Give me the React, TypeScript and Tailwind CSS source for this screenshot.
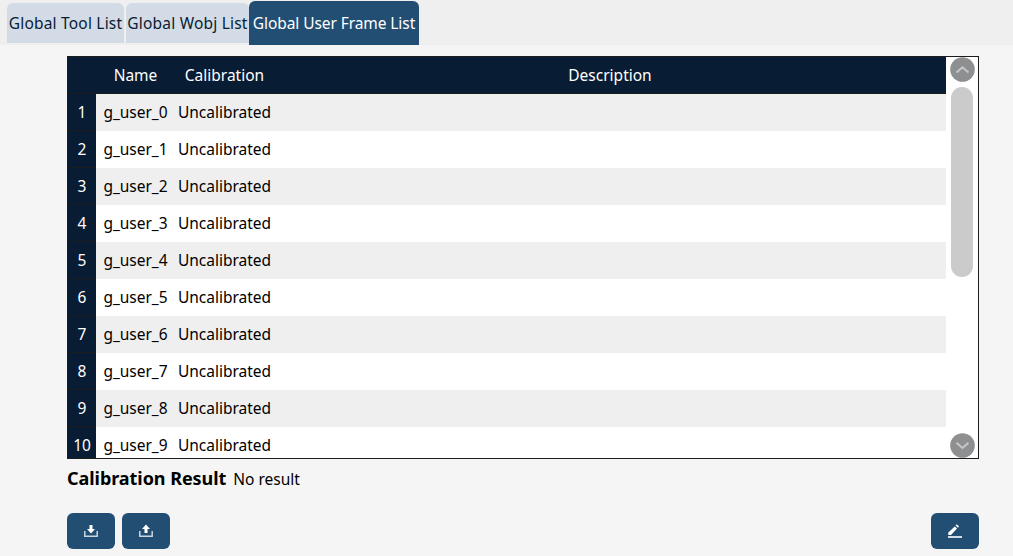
import React from 'react';

const rows = Array.from({ length: 10 }, (_, i) => ({
  id: i + 1,
  name: `g_user_${i}`,
  calibration: 'Uncalibrated',
}));

function ScrollButton({ down = false }: { down?: boolean }) {
  return (
    <button className="block w-[25px] h-[25px]">
      <svg width="25" height="25" viewBox="0 0 25 25" fill="none">
        <circle cx="12.5" cy="12.5" r="12.3" fill="#8e8f90" />
        <path
          d={down ? 'M6.5 9.8 L12.5 15 L18.5 9.8' : 'M6.5 15.4 L12.5 10.2 L18.5 15.4'}
          stroke="#c6c7c8"
          strokeWidth="2"
        />
      </svg>
    </button>
  );
}

function IconButton({ children }: { children: React.ReactNode }) {
  return (
    <button className="flex items-center justify-center w-12 h-9 rounded-md bg-[#224e74]">
      {children}
    </button>
  );
}

export default function App() {
  return (
    <div className="w-[1013px] h-[556px] overflow-hidden bg-[#f5f5f5] text-black text-[15.5px] whitespace-nowrap font-['Noto_Sans','Open_Sans',sans-serif]">
      <div className="flex h-[45px] pl-[7px] bg-[#efefef]">
        <div className="flex items-center justify-center w-[117px] h-10 mt-[3px] pt-0.5 mr-0.5 rounded-t-md bg-[#d3dbe6] text-[#081c34] tracking-[0.2px]">
          Global Tool List
        </div>
        <div className="flex items-center justify-center w-[123px] h-10 mt-[3px] pt-0.5 rounded-t-md bg-[#d3dbe6] text-[#081c34] tracking-[0.2px]">
          Global Wobj List
        </div>
        <div className="flex items-center justify-center w-[170px] h-11 mt-px pt-0.5 rounded-t-md bg-[#224e74] text-white tracking-[-0.08px]">
          Global User Frame List
        </div>
      </div>

      <div className="flex w-[912px] h-[403px] mt-[11px] ml-[67px] border border-[#1c1c1c] bg-white overflow-hidden">
        <div className="w-[878px]">
          <div className="grid grid-cols-[28px_79px_99px_672px] h-[37px] pt-0.5 items-center text-center bg-[#081c34] border-b border-[#1c1c1c] text-white">
            <div />
            <div>Name</div>
            <div>Calibration</div>
            <div>Description</div>
          </div>
          {rows.map((row) => (
            <div
              key={row.id}
              className="grid grid-cols-[28px_79px_99px_672px] h-[37px] odd:bg-white even:bg-[#efefef] leading-[37px]"
            >
              <div className="h-[37px] leading-[37px] text-center bg-[#081c34] border-b border-[#1c1c1c] text-white">
                {row.id}
              </div>
              <div className="text-center tracking-[-0.05px]">{row.name}</div>
              <div className="text-center">{row.calibration}</div>
            </div>
          ))}
        </div>
        <div className="flex flex-col items-center w-8 h-[401px]">
          <ScrollButton />
          <div className="w-[22px] h-[190px] mt-[5px] rounded-full bg-[#cbcbcb]" />
          <div className="mt-auto">
            <ScrollButton down />
          </div>
        </div>
      </div>

      <div className="flex items-baseline h-[54px] ml-[67px] leading-[38px]">
        <span className="text-lg leading-[38px] font-bold tracking-[-0.05px]">Calibration Result</span>
        <span className="ml-[7px]">No result</span>
      </div>

      <div className="flex gap-[7px] w-[912px] ml-[67px]">
        <IconButton>
          <svg width="14" height="14" viewBox="0 0 14 14" fill="none">
            <path d="M0.8 7 V12.2 H13.2 V7" stroke="#c9d6df" strokeWidth="1.5" />
            <path d="M5.5 1 H8.5 V5 H11 L7 9.4 L3 5 H5.5 Z" fill="#fff" />
          </svg>
        </IconButton>
        <IconButton>
          <svg width="14" height="14" viewBox="0 0 14 14" fill="none">
            <path d="M0.8 7 V12.2 H13.2 V7" stroke="#c9d6df" strokeWidth="1.5" />
            <path d="M5.5 9 H8.5 V5 H11 L7 0.6 L3 5 H5.5 Z" fill="#fff" />
          </svg>
        </IconButton>
        <div className="ml-auto">
          <IconButton>
            <svg width="14" height="14" viewBox="0 0 14 14" fill="#fff">
              <path d="M0.3 11 V8.5 L6.8 2.4 L9 4.6 L3 11 Z" />
              <path d="M7.6 1.4 L8.8 0.3 L11 2.5 L9.9 3.7 Z" />
              <rect x="0" y="12.2" width="14" height="1.6" />
            </svg>
          </IconButton>
        </div>
      </div>
    </div>
  );
}
